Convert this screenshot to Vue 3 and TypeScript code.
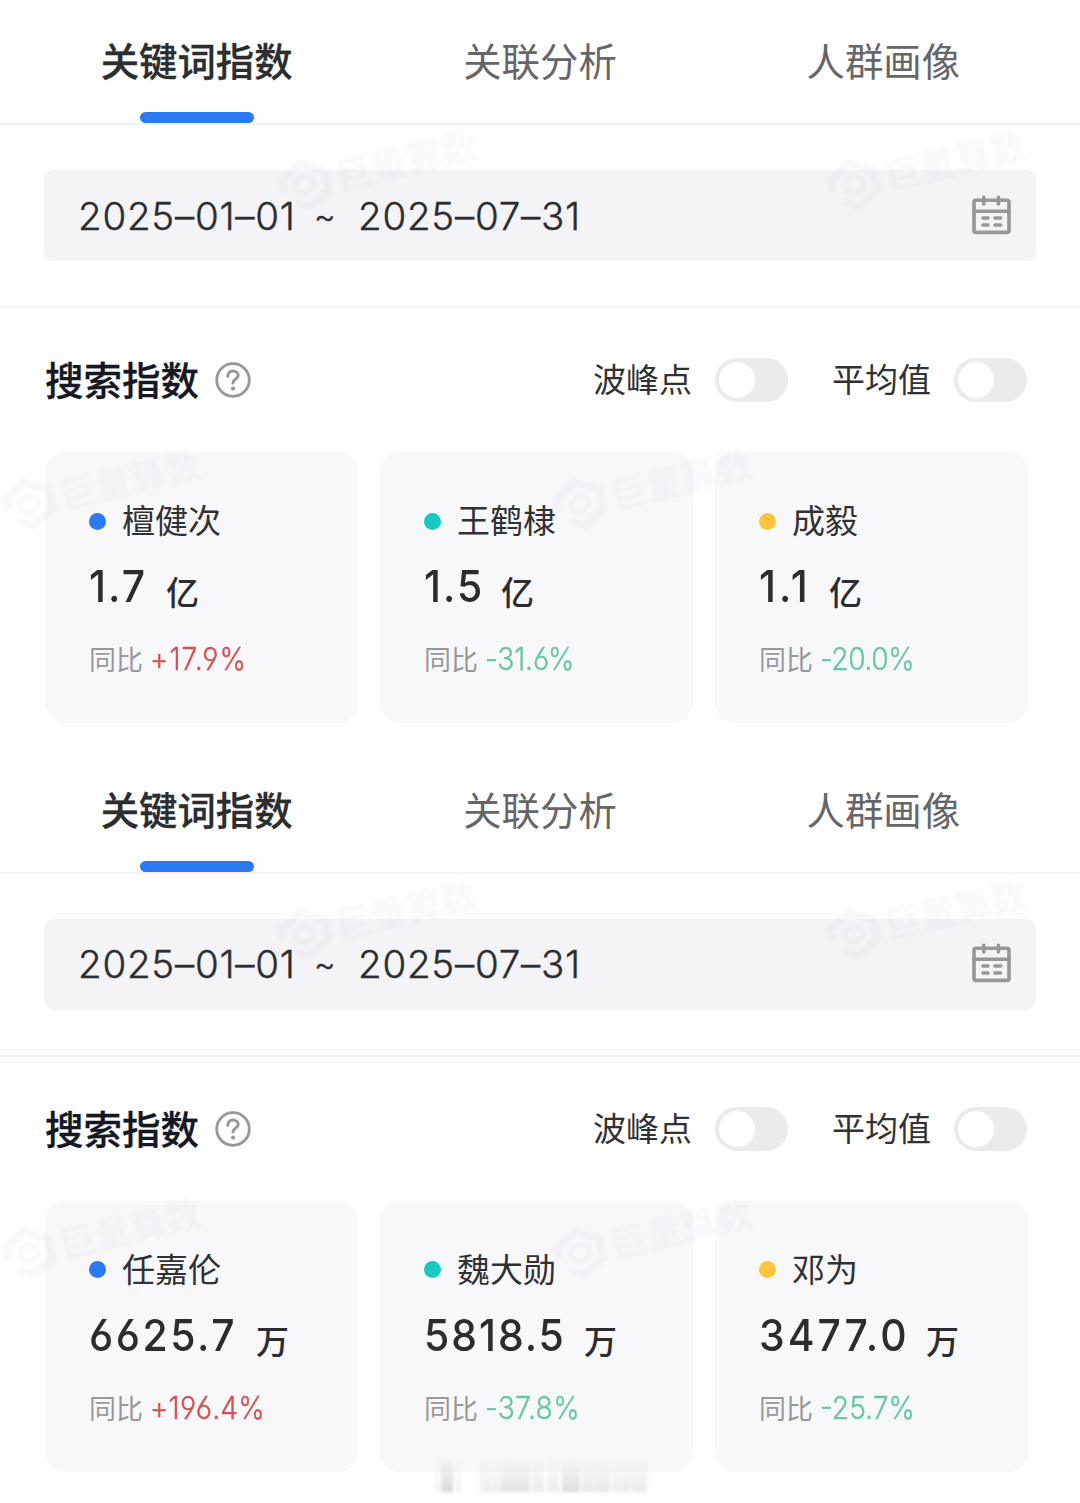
<script setup lang="ts">
interface Entry {
  name: string
  color: string
  value: string
  unit: string
  change: string
  valueSpacing: number
  valueWidth: number
  changeSpacing: number
}

interface Panel {
  id: number
  entries: Entry[]
}

const tabs: string[] = ['关键词指数', '关联分析', '人群画像']
const switches: string[] = ['波峰点', '平均值']

const BLUE = '#2a7bf3'
const TEAL = '#18c9c3'
const YELLOW = '#fcc53c'

const panels: Panel[] = [
  {
    id: 1,
    entries: [
      { name: '檀健次', color: BLUE, value: '1.7', unit: '亿', change: '+17.9%', valueSpacing: 2.2, valueWidth: 77, changeSpacing: 1.1 },
      { name: '王鹤棣', color: TEAL, value: '1.5', unit: '亿', change: '-31.6%', valueSpacing: 2.2, valueWidth: 77, changeSpacing: -0.2 },
      { name: '成毅', color: YELLOW, value: '1.1', unit: '亿', change: '-20.0%', valueSpacing: 3.2, valueWidth: 70, changeSpacing: -0.5 },
    ],
  },
  {
    id: 2,
    entries: [
      { name: '任嘉伦', color: BLUE, value: '6625.7', unit: '万', change: '+196.4%', valueSpacing: 2.7, valueWidth: 167, changeSpacing: 0.2 },
      { name: '魏大勋', color: TEAL, value: '5818.5', unit: '万', change: '-37.8%', valueSpacing: 2.1, valueWidth: 160, changeSpacing: 0.4 },
      { name: '邓为', color: YELLOW, value: '3477.0', unit: '万', change: '-25.7%', valueSpacing: 3.2, valueWidth: 167, changeSpacing: 0 },
    ],
  },
]

const marks = [
  { x: 278, y: 158 },
  { x: 827, y: 158 },
  { x: 2, y: 477 },
  { x: 553, y: 477 },
]

const strips = [
  { x: 0, w: 4, o: 0.25 },
  { x: 6, w: 12, o: 0.7 },
  { x: 21, w: 5, o: 0.25 },
  { x: 45, w: 12, o: 0.3 },
  { x: 58, w: 9, o: 0.3 },
  { x: 67, w: 28, o: 0.5 },
  { x: 97, w: 12, o: 0.35 },
  { x: 112, w: 12, o: 0.3 },
  { x: 127, w: 18, o: 0.6 },
  { x: 147, w: 12, o: 0.4 },
  { x: 160, w: 15, o: 0.4 },
  { x: 177, w: 9, o: 0.3 },
  { x: 187, w: 9, o: 0.35 },
  { x: 197, w: 15, o: 0.35 },
]
</script>

<template>
  <main class="page">
    <section v-for="panel in panels" :key="panel.id" class="panel">
      <nav class="tabs">
        <div v-for="(tab, i) in tabs" :key="tab" class="tab" :class="{ active: i === 0 }">
          <span>{{ tab }}</span>
          <i v-if="i === 0" class="bar"></i>
        </div>
      </nav>

      <div class="date-area">
        <div class="date-box">
          <span class="date from">2025–01–01</span>
          <span class="date tilde">~</span>
          <span class="date to">2025–07–31</span>
          <svg class="calendar" width="40" height="40" viewBox="0 0 40 40" fill="none" stroke="#96979b" stroke-width="3.6" stroke-linecap="round">
            <rect x="2" y="5.2" width="35" height="32.2" rx="2" />
            <path d="M2 16.3H37M11.8 2.4V9M26.4 2.4V9M11 23H16M23 23H28.6M11 30H16M23 30H28.6" />
          </svg>
        </div>
      </div>

      <div class="heading">
        <h2>搜索指数</h2>
        <svg class="help" width="36" height="36" viewBox="0 0 36 36" fill="none" stroke="#98989a" stroke-linecap="round">
          <circle cx="18" cy="18" r="16.3" stroke-width="2.8" />
          <path d="M12.8 14.2C12.8 11 15 9 18 9C21 9 23.2 11 23.2 13.6C23.2 17.2 18 17 18 21" stroke-width="3" />
          <circle cx="18" cy="26.6" r="2.1" fill="#98989a" stroke="none" />
        </svg>
        <div class="switches">
          <div v-for="label in switches" :key="label" class="switch">
            <span>{{ label }}</span>
            <i class="track"><b></b></i>
          </div>
        </div>
      </div>

      <div class="cards">
        <article v-for="entry in panel.entries" :key="entry.name" class="card">
          <div class="name">
            <i class="dot" :style="{ background: entry.color }"></i>
            <span>{{ entry.name }}</span>
          </div>
          <div class="value">
            <span class="num-box" :style="{ width: entry.valueWidth + 'px' }">
              <span class="num" :style="{ letterSpacing: entry.valueSpacing + 'px' }">{{ entry.value }}</span>
            </span>
            <span class="unit">{{ entry.unit }}</span>
          </div>
          <div class="change">
            <span class="label">同比</span>
            <span class="pct" :class="entry.change.startsWith('+') ? 'up' : 'down'" :style="{ letterSpacing: entry.changeSpacing + 'px' }">{{ entry.change }}</span>
          </div>
        </article>
      </div>

      <div v-for="(m, i) in marks" :key="i" class="mark" :style="{ left: m.x + 'px', top: m.y + 'px' }">
        <svg width="54" height="54" viewBox="0 0 54 54" fill="none" stroke="currentColor" stroke-width="8">
          <path d="M5 29V17L27 5L49 17V37L27 49L13 42" />
          <path d="M27 18L36 23V31L27 36L18 31V23Z" stroke-width="5" />
        </svg>
        <span>巨量算数</span>
      </div>
    </section>
    <div class="smear">
      <i v-for="s in strips" :key="s.x" :style="{ left: s.x + 'px', width: s.w + 'px', opacity: s.o }"></i>
    </div>
  </main>
</template>

<style>
body {
  margin: 0;
  background: #fefefe;
}
</style>

<style scoped>
.page {
  position: relative;
  width: 1080px;
  height: 1503px;
  overflow: hidden;
  background: #fefefe;
  color: #303133;
  font-family: Inter, "Noto Sans CJK SC", sans-serif;
}
.panel {
  position: relative;
  height: 748.5px;
}
.tabs {
  display: flex;
  height: 123px;
  padding: 0 25px;
  border-bottom: 2px solid #f2f2f3;
}
.tab {
  flex: 1;
  display: flex;
  flex-direction: column;
  align-items: center;
  padding-top: 34px;
  font-size: 38.4px;
  line-height: 57px;
  color: #666668;
}
.tab.active {
  font-weight: 500;
  color: #2c2d2f;
  -webkit-text-stroke: 0.3px;
}
.bar {
  width: 114px;
  height: 11px;
  margin-top: 21px;
  border-radius: 6px;
  background: #2a7bf3;
}
.date-area {
  height: 136px;
  padding: 45px 44px 0;
  border-bottom: 2px solid #f4f4f5;
}
.date-box {
  display: flex;
  align-items: center;
  height: 91px;
  padding: 0 24px 0 34px;
  border-radius: 9px;
  background: #f4f4f7;
}
.date {
  font-size: 38.5px;
  line-height: 60px;
  font-weight: 300;
  letter-spacing: 0.75px;
  -webkit-text-stroke: 0.4px;
  white-space: pre;
  color: #2c2d30;
}
.from {
  width: 236px;
}
.tilde {
  width: 44px;
  font-size: 33px;
}
.calendar {
  margin-left: auto;
  margin-bottom: 2px;
}
.heading {
  display: flex;
  align-items: center;
  height: 144px;
  padding: 0 53px 0 45px;
}
h2 {
  margin: 0;
  padding-top: 2px;
  font-size: 38.5px;
  line-height: 56px;
  font-weight: 500;
  -webkit-text-stroke: 0.3px;
  color: #151823;
}
.help {
  margin-left: 16px;
}
.switches {
  display: flex;
  gap: 44px;
  margin-left: auto;
}
.switch {
  display: flex;
  align-items: center;
  gap: 23px;
  font-size: 33px;
  line-height: 50px;
}
.track {
  width: 73px;
  height: 44px;
  border-radius: 22px;
  background: #ebebec;
}
.track b {
  display: block;
  width: 36px;
  height: 36px;
  margin: 4px;
  border-radius: 50%;
  background: #fefefe;
}
.cards {
  display: flex;
  gap: 22px;
  padding: 0 52px 0 45px;
}
.card {
  flex: 1;
  height: 271px;
  box-sizing: border-box;
  padding: 45px 0 0 44px;
  border-radius: 20px;
  background: #f8f8fb;
}
.name {
  display: flex;
  align-items: center;
  gap: 16px;
  height: 48px;
  font-size: 33px;
  line-height: 50px;
}
.dot {
  width: 17px;
  height: 17px;
  border-radius: 50%;
}
.value {
  display: flex;
  height: 60px;
  margin-top: 11px;
  color: #2b2c2f;
}
.num {
  display: inline-block;
  font-size: 44px;
  line-height: 60px;
  font-weight: 500;
  font-feature-settings: "cv03", "cv04";
  transform: scaleX(0.93);
  transform-origin: left;
}
.unit {
  font-size: 33px;
  line-height: 74px;
  font-weight: 500;
}
.change {
  display: flex;
  height: 40px;
  margin-top: 23px;
}
.label {
  width: 61px;
  font-size: 27px;
  line-height: 43px;
  color: #98989b;
}
.pct {
  font-size: 31px;
  line-height: 39px;
  font-weight: 300;
  font-feature-settings: "cv03", "cv04";
  -webkit-text-stroke: 0.4px;
  transform: scaleX(0.91);
  transform-origin: left;
}
.up {
  color: #d6504f;
}
.down {
  color: #68c8a0;
}
.mark {
  position: absolute;
  display: flex;
  align-items: center;
  gap: 5px;
  color: rgba(120, 120, 140, 0.045);
  transform: rotate(-13deg);
  transform-origin: 27px 27px;
  filter: blur(1px);
  font-size: 36px;
  line-height: 54px;
  font-weight: 700;
  white-space: nowrap;
}
.smear {
  position: absolute;
  left: 435px;
  top: 1457px;
  width: 212px;
  height: 35px;
  filter: blur(1.5px);
}
.smear i {
  position: absolute;
  top: 0;
  height: 100%;
  background: linear-gradient(rgba(190, 190, 192, 0), rgba(190, 190, 192, 0.85));
}
</style>
